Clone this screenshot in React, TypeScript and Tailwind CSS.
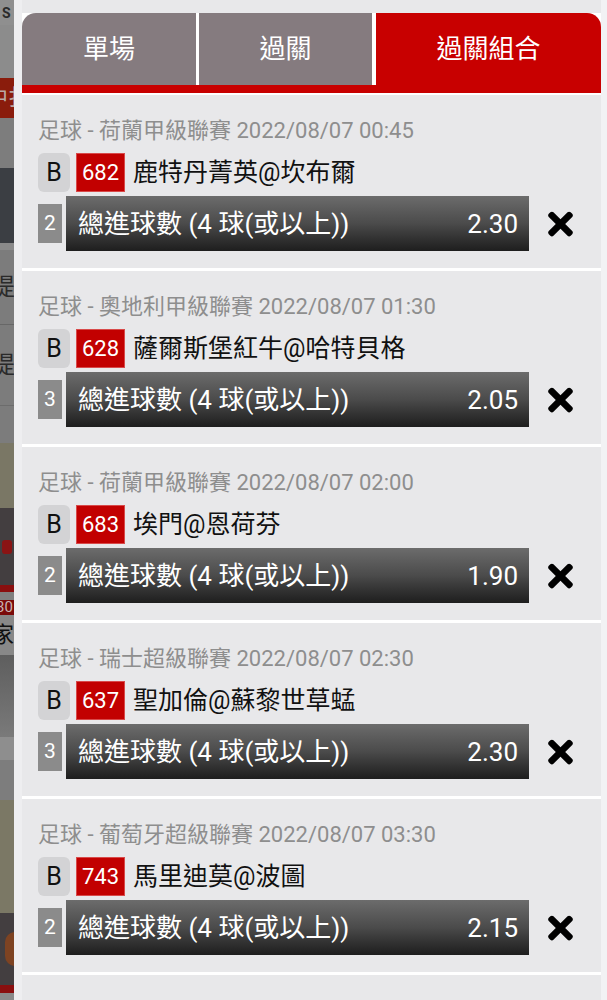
import React from "react";
import { FaTimes } from "react-icons/fa";

type Bet = {
  league: string;
  time: string;
  no: string;
  match: string;
  legs: string;
  odds: string;
};

const bets: Bet[] = [
  { league: "荷蘭甲級聯賽", time: "2022/08/07 00:45", no: "682", match: "鹿特丹菁英@坎布爾", legs: "2", odds: "2.30" },
  { league: "奧地利甲級聯賽", time: "2022/08/07 01:30", no: "628", match: "薩爾斯堡紅牛@哈特貝格", legs: "3", odds: "2.05" },
  { league: "荷蘭甲級聯賽", time: "2022/08/07 02:00", no: "683", match: "埃門@恩荷芬", legs: "2", odds: "1.90" },
  { league: "瑞士超級聯賽", time: "2022/08/07 02:30", no: "637", match: "聖加倫@蘇黎世草蜢", legs: "3", odds: "2.30" },
  { league: "葡萄牙超級聯賽", time: "2022/08/07 03:30", no: "743", match: "馬里迪莫@波圖", legs: "2", odds: "2.15" },
];

function LeftStrip() {
  return (
    <div className="w-[14px] shrink-0 flex flex-col overflow-hidden">
      <div className="h-[25px] bg-[#8f8f8f] overflow-hidden pl-[2px] text-[14px] leading-[26px] font-bold text-[#2a2a2a]">S</div>
      <div className="h-[53px] bg-[#8c8c8c]" />
      <div className="h-[40px] bg-[#8a1c0c] overflow-hidden flex items-center">
        <span className="whitespace-nowrap ml-[-14px] text-[22px] leading-none text-[#b9a9a5]">中扌</span>
      </div>
      <div className="h-[50px] bg-[#7d7d7d]" />
      <div className="h-[75px] bg-[#3b3e43]" />
      <div className="h-[7px] bg-[#8a8a8a]" />
      <div className="h-[75px] bg-[#7c7c7c] border-b border-[#676767] overflow-hidden flex items-center">
        <span className="whitespace-nowrap ml-[-9px] text-[24px] leading-none text-[#2a2a2a]">提</span>
      </div>
      <div className="h-[80px] bg-[#7c7c7c] overflow-hidden flex items-center">
        <span className="whitespace-nowrap ml-[-9px] text-[24px] leading-none text-[#2a2a2a]">提</span>
      </div>
      <div className="h-[38px] bg-[#7c7c7c] border-t border-[#6c6c6c]" />
      <div className="h-[65px] bg-[#7a7765]" />
      <div className="h-[77px] bg-[#433e40] flex items-center overflow-hidden">
        <div className="ml-[2px] w-[10px] h-[14px] rounded-[3px] bg-[#8a1414]" />
      </div>
      <div className="h-[7px] bg-[#8a0f0f]" />
      <div className="h-[8px] bg-[#808080]" />
      <div className="h-[15px] bg-[#7a0a0a] overflow-hidden flex items-center">
        <span className="whitespace-nowrap ml-[-4px] text-[15px] leading-none text-[#c9b3b3]">30</span>
      </div>
      <div className="h-[40px] bg-[#888888] overflow-hidden flex items-center">
        <span className="whitespace-nowrap ml-[-8px] text-[22px] leading-none text-[#111]">家</span>
      </div>
      <div className="h-[82px] bg-linear-to-b from-[#5e5e5e] to-[#7a7a7a]" />
      <div className="h-[23px] bg-[#8e8e8e]" />
      <div className="h-[40px] bg-[#7d7d7d]" />
      <div className="h-[113px] bg-[#7b7865]" />
      <div className="h-[72px] bg-[#433e40] flex items-center overflow-hidden">
        <div className="ml-[5px] w-[20px] h-[34px] rounded-full bg-[#7e4322] shrink-0" />
      </div>
      <div className="h-[8px] bg-[#8a0f0f]" />
      <div className="flex-1 bg-[#8a8a8a]" />
    </div>
  );
}

function Card({ bet }: { bet: Bet }) {
  return (
    <div className="shrink-0 h-[176px] bg-[#e8e8ea] pl-[16px] pt-[22px] border-b-[3px] border-white">
      <div className="h-[170px] flex flex-col border-b border-[#d4d4d6]">
        <div className="h-[28px] text-[22px] leading-[28px] text-[#8e8e8e] whitespace-nowrap">
          足球 - {bet.league} {bet.time}
        </div>
        <div className="mt-[8px] h-[39px] flex items-center">
          <div className="w-[32px] h-[39px] rounded-[6px] bg-[#d3d3d5] flex items-center justify-center text-[25px] text-[#111]">
            B
          </div>
          <div className="ml-[6px] w-[49px] h-[39px] bg-[#c20000] border border-[#d84a4a] flex items-center justify-center text-[22px] text-white">
            {bet.no}
          </div>
          <div className="ml-[8px] text-[25px] leading-none text-[#111] whitespace-nowrap">{bet.match}</div>
        </div>
        <div className="mt-[4px] h-[55px] flex items-center">
          <div className="w-[24px] h-[39px] bg-[#8b8b8b] flex items-center justify-center text-[21px] text-white">
            {bet.legs}
          </div>
          <div className="ml-[4px] w-[463px] h-[55px] bg-linear-to-b from-[#6c6c6c] via-[#4b4b4b] to-[#1e1e1e] flex items-center justify-between pl-[12px] pr-[11px] text-white text-[26px] leading-none whitespace-nowrap">
            <span>總進球數 (4 球(或以上))</span>
            <span>{bet.odds}</span>
          </div>
          <div className="ml-[19px] w-[25px] flex items-center justify-center text-black">
            <FaTimes size={36} />
          </div>
        </div>
      </div>
    </div>
  );
}

export default function App() {
  return (
    <div className="w-[607px] h-[1000px] overflow-hidden flex bg-[#e8e8ea] font-['Roboto','Noto_Sans_CJK_TC',sans-serif]">
      <LeftStrip />
      <div className="w-[8px] shrink-0 bg-[#eeeef0]" />
      <div className="w-[579px] shrink-0 flex flex-col pt-[13px]">
        <div className="h-[72px] flex shrink-0 bg-white">
          <div className="w-[177px] border-r-[3px] border-white bg-[#857b7f] rounded-tl-[14px] flex items-center justify-center text-white text-[26px]">
            單場
          </div>
          <div className="w-[177px] border-r-[4px] border-white bg-[#857b7f] flex items-center justify-center text-white text-[26px]">
            過關
          </div>
          <div className="flex-1 bg-[#c80000] rounded-tr-[14px] flex items-center justify-center text-white text-[26px]">
            過關組合
          </div>
        </div>
        <div className="h-[8px] bg-[#c80000] shrink-0" />
        <div className="h-[2px] bg-white shrink-0" />
        {bets.map((b, i) => (
          <Card key={i} bet={b} />
        ))}
        <div className="flex-1 bg-[#e8e8ea]" />
      </div>
      <div className="w-[6px] shrink-0 bg-[#f2f2f4]" />
    </div>
  );
}
